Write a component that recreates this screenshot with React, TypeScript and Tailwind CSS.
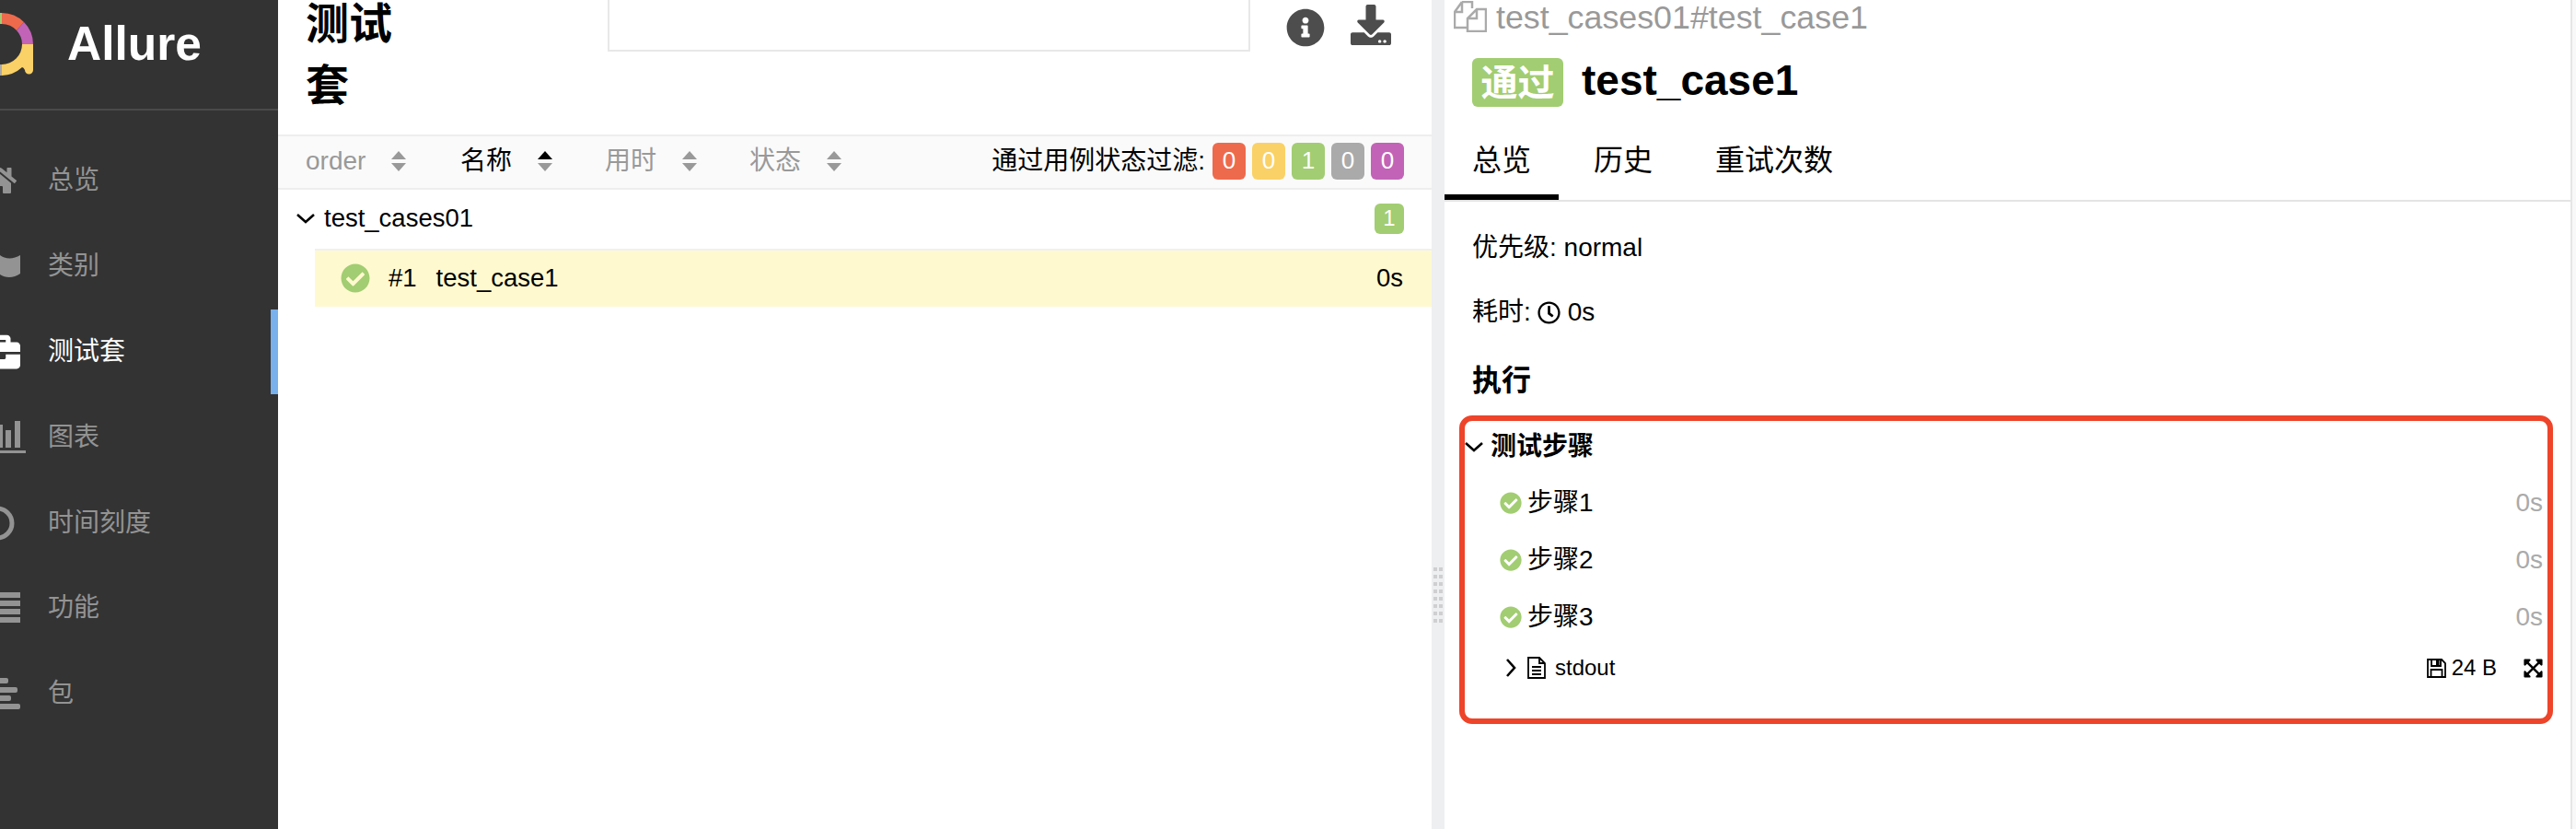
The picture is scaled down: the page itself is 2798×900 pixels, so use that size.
import {
  FaHome,
  FaBriefcase,
  FaInfoCircle,
  FaDownload,
  FaCheckCircle,
  FaRegClock,
  FaExpandArrowsAlt,
} from "react-icons/fa";

// sidebar entries, icons are clipped by the left edge of the window
const navItems = [
  { label: "总览", icon: <FaHome size={36} className="-ml-[18px]" /> },
  {
    label: "类别",
    icon: (
      <svg width="22" height="26" viewBox="0 0 22 26" fill="currentColor">
        <path d="M0 1C5 5 14 6 22 1V21C15 26 6 26 0 22Z" />
      </svg>
    ),
  },
  {
    label: "测试套",
    active: true,
    icon: <FaBriefcase size={42} className="-ml-[20px]" />,
  },
  {
    label: "图表",
    icon: (
      <svg width="28" height="36" viewBox="0 0 28 36" fill="currentColor">
        <rect x="0" y="4" width="3" height="25" />
        <rect x="6" y="10" width="6" height="19" />
        <rect x="16" y="0" width="6" height="29" />
        <rect x="0" y="32" width="28" height="3" />
      </svg>
    ),
  },
  {
    label: "时间刻度",
    icon: (
      <svg width="16" height="38" viewBox="0 0 16 38" fill="none" stroke="currentColor" strokeWidth="5">
        <circle cx="-3" cy="19" r="16" />
      </svg>
    ),
  },
  {
    label: "功能",
    icon: (
      <svg width="22" height="34" viewBox="0 0 22 34" fill="currentColor">
        <rect y="0" width="22" height="6" />
        <rect y="9" width="22" height="6" />
        <rect y="18" width="22" height="6" />
        <rect y="27" width="22" height="6" />
      </svg>
    ),
  },
  {
    label: "包",
    icon: (
      <svg width="22" height="35" viewBox="0 0 22 35" fill="currentColor">
        <rect x="-4" y="0" width="13" height="6" rx="2" />
        <rect x="-4" y="10" width="23" height="6" rx="2" />
        <rect x="-4" y="19" width="16" height="6" rx="2" />
        <rect x="-4" y="28" width="26" height="6" rx="2" />
      </svg>
    ),
  },
];

const statusCounts = [
  { n: 0, cls: "bg-[#ee6a4c]" },
  { n: 0, cls: "bg-[#fad166]" },
  { n: 1, cls: "bg-[#a2cd72]" },
  { n: 0, cls: "bg-[#aaaaaa]" },
  { n: 0, cls: "bg-[#c263b7]" },
];

function SortIcon({ active }: { active?: boolean }) {
  return (
    <svg width="16" height="22" viewBox="0 0 16 22" className="shrink-0">
      <path d="M8 0L16 9H0Z" fill={active ? "#000" : "#999"} />
      <path d="M8 22L16 13H0Z" fill="#999" />
    </svg>
  );
}

function Chevron({ right }: { right?: boolean }) {
  return right ? (
    <svg width="12" height="20" viewBox="0 0 12 20" fill="none" stroke="#000" strokeWidth="2.6" className="shrink-0">
      <path d="M2 1L10 10L2 19" />
    </svg>
  ) : (
    <svg width="20" height="12" viewBox="0 0 20 12" fill="none" stroke="#000" strokeWidth="2.6" className="shrink-0">
      <path d="M1 2L10 10L19 2" />
    </svg>
  );
}

function Step({ label }: { label: string }) {
  return (
    <div className="flex h-[62px] items-center pl-[60px] pr-[30px]">
      <FaCheckCircle size={24} className="shrink-0 text-[#a2cd72]" />
      <span className="ml-[6px]">{label}</span>
      <span className="ml-auto text-[#aaaaaa]">0s</span>
    </div>
  );
}

export default function App() {
  return (
    <div className="relative flex h-[900px] w-[2798px] overflow-hidden bg-white text-[28px] text-black font-['Liberation_Sans','Noto_Sans_CJK_SC',sans-serif]">
      {/* Sidebar */}
      <aside className="h-full w-[302px] shrink-0 overflow-hidden bg-[#333333]">
        <div className="flex h-[120px] items-start border-b-2 border-[#4a4a4a]">
          <svg width="40" height="70" viewBox="0 0 40 70" className="mt-[13px] shrink-0">
            <path d="M0 1A34 34 0 0 1 2 1V13A22 22 0 0 0 0 13Z" fill="#a2cd72" />
            <path d="M2 1A34 34 0 0 1 26 11L18 20A22 22 0 0 0 2 13Z" fill="#ee6a4c" />
            <path d="M26 11A34 34 0 0 1 36 35H24A22 22 0 0 0 18 20Z" fill="#c263b7" />
            <path d="M36 35V63A4.500 4.500 0 0 1 27 63Q25.500 60 24 60A34 34 0 0 1 2 69V57A22 22 0 0 0 24 35Z" fill="#fad166" />
            <path d="M0 69V57H2V69Z" fill="#aaaaaa" />
          </svg>
          <span className="ml-[33px] mt-[18px] text-[51.500px] font-bold leading-[58px] text-white">Allure</span>
        </div>
        <nav className="pt-[30px]">
          {navItems.map((item) => (
            <div
              key={item.label}
              className={`flex h-[92.800px] items-center border-r-[8px] ${
                item.active ? "border-[#78b1eb] text-white" : "border-transparent text-[#939393]"
              }`}
            >
              <span className="flex w-[52px] shrink-0 items-center">{item.icon}</span>
              <span>{item.label}</span>
            </div>
          ))}
        </nav>
      </aside>

      {/* Test suites pane */}
      <main className="h-full w-[1253px] shrink-0">
        <header className="flex h-[146px] items-start">
          <div className="w-[358px] shrink-0 pl-[30px]">
            <h2 className="-mt-[8px] w-[100px] text-[47px] font-bold leading-[67px]">测试套</h2>
          </div>
          <div className="h-[56px] w-[698px] shrink-0 border-x-2 border-b-2 border-[#e8e8e8]" />
          <FaInfoCircle size={42} className="ml-[39px] mt-[9px] shrink-0 text-[#4d4d4d]" />
          <FaDownload size={44} className="ml-[28px] mt-[5px] shrink-0 text-[#4d4d4d]" />
        </header>

        <div className="flex h-[60px] items-center border-y-2 border-[#eeeeee] bg-[#fafafa] pb-[3px] pl-[30px] pr-[30px] text-[#999999]">
          <div className="flex w-[168px] shrink-0 items-center">
            <span>order</span>
            <span className="ml-[28px]"><SortIcon /></span>
          </div>
          <div className="flex w-[157px] shrink-0 items-center text-black">
            <span>名称</span>
            <span className="ml-[28px]"><SortIcon active /></span>
          </div>
          <div className="flex w-[157px] shrink-0 items-center">
            <span>用时</span>
            <span className="ml-[28px]"><SortIcon /></span>
          </div>
          <div className="flex w-[157px] shrink-0 items-center">
            <span>状态</span>
            <span className="ml-[28px]"><SortIcon /></span>
          </div>
          <div className="ml-auto flex items-center gap-[7px] text-black">
            <span className="mr-[1px]">通过用例状态过滤:</span>
            {statusCounts.map((s, i) => (
              <span
                key={i}
                className={`flex h-[40px] w-[36px] items-center justify-center rounded-[6px] text-[26px] text-white ${s.cls}`}
              >
                {s.n}
              </span>
            ))}
          </div>
        </div>

        <div className="flex h-[64px] items-center pb-[2px] pl-[20px] pr-[30px] text-[27.500px]">
          <Chevron />
          <span className="ml-[10px]">test_cases01</span>
          <span className="ml-auto flex h-[33px] w-[32px] items-center justify-center rounded-[6px] bg-[#a2cd72] text-[24px] text-white">
            1
          </span>
        </div>
        <div className="ml-[40px] flex h-[63px] items-center border-t-2 border-[#f0f0f0] bg-[#fff9d0] pb-[1px] pl-[28px] pr-[31px] text-[27.500px]">
          <FaCheckCircle size={32} className="shrink-0 text-[#a2cd72]" />
          <span className="ml-[20px]">#1</span>
          <span className="ml-[21px]">test_case1</span>
          <span className="ml-auto">0s</span>
        </div>
      </main>

      {/* Splitter */}
      <div className="h-full w-[14px] shrink-0 bg-[#eeeff1] pt-[616px]">
        <div className="ml-[2px] grid w-[10px] grid-cols-2 gap-x-[2px] gap-y-[4px]">
          {Array.from({ length: 16 }).map((_, i) => (
            <span key={i} className="h-[4px] w-[4px] bg-[#cfcfd1]" />
          ))}
        </div>
      </div>

      {/* Test case detail */}
      <section className="h-full w-[1223px] shrink-0">
        <div className="flex h-[36px] items-center pl-[10px] text-[35.800px] text-[#999999]">
          <svg width="36" height="34" viewBox="0 0 36 34" fill="none" stroke="#aaaaaa" strokeWidth="2.500" className="shrink-0">
            <path d="M9 1H20V8M9 1L1 12V29H14M9 1V12H1" />
            <path d="M25 9H35V33H15V19ZM25 9V19H15" />
          </svg>
          <span className="ml-[10px] whitespace-nowrap pt-[2px] leading-[34px]">test_cases01#test_case1</span>
        </div>

        <div className="mt-[27px] flex h-[53px] items-center pl-[30px]">
          <span className="flex h-[53px] w-[99px] items-center justify-center rounded-[6px] bg-[#a2cd72] text-[40px] font-bold text-white">
            通过
          </span>
          <span className="ml-[20px] pb-[5px] text-[46px] font-bold">test_case1</span>
        </div>

        <div className="mt-[17px] flex h-[86px] gap-[8px] border-b-2 border-[#e4e4e4] text-[32px]">
          <div className="flex h-[84px] w-[124px] items-center justify-center border-b-[6px] border-black pt-[4px]">总览</div>
          <div className="flex h-[84px] w-[124px] items-center justify-center pb-[2px]">历史</div>
          <div className="flex h-[84px] w-[188px] items-center justify-center pb-[2px]">重试次数</div>
        </div>

        <div className="pl-[30px]">
          <div className="mt-[30px] flex h-[40px] items-center">优先级: normal</div>
          <div className="mt-[30px] flex h-[40px] items-center">
            耗时:
            <FaRegClock size={25} className="ml-[7px] shrink-0" />
            <span className="ml-[8px]">0s</span>
          </div>
          <div className="mt-[34px] flex h-[40px] items-center text-[32px] font-bold">执行</div>
        </div>

        <div className="mt-[22px]">
          <div className="flex h-[60px] items-center pl-[22px] font-bold">
            <Chevron />
            <span className="ml-[8px]">测试步骤</span>
          </div>
          <Step label="步骤1" />
          <Step label="步骤2" />
          <Step label="步骤3" />
          <div className="-mt-[4px] flex h-[56px] items-center pl-[66px] pr-[30px] text-[24px]">
            <Chevron right />
            <svg width="20" height="24" viewBox="0 0 20 24" fill="none" stroke="#000" strokeWidth="1.800" className="ml-[12px] shrink-0">
              <path d="M1 1H13L19 7V23H1Z" />
              <path d="M13 1V7H19M5 11H15M5 15H15M5 19H15" />
            </svg>
            <span className="ml-[10px]">stdout</span>
            <svg width="21" height="21" viewBox="0 0 21 21" fill="none" stroke="#000" strokeWidth="1.800" className="ml-auto shrink-0">
              <path d="M1 1H16L20 5V20H1Z" />
              <path d="M5 1V8H15V1M4.500 20V12H16.500V20" />
              <rect x="10" y="2" width="3.500" height="5" fill="#000" stroke="none" />
            </svg>
            <span className="ml-[6px]">24 B</span>
            <FaExpandArrowsAlt size={23} className="ml-[28px] shrink-0 -mr-[1px]" />
          </div>
        </div>
      </section>

      {/* Scrollbar track */}
      <div className="h-full flex-1 border-l-2 border-[#e6e6e6] bg-[#f8f8f8]" />

      {/* Red annotation box drawn over the screenshot */}
      <div className="absolute left-[1585px] top-[451px] h-[335px] w-[1188px] rounded-[14px] border-[6px] border-[#ee4429]" />
    </div>
  );
}
